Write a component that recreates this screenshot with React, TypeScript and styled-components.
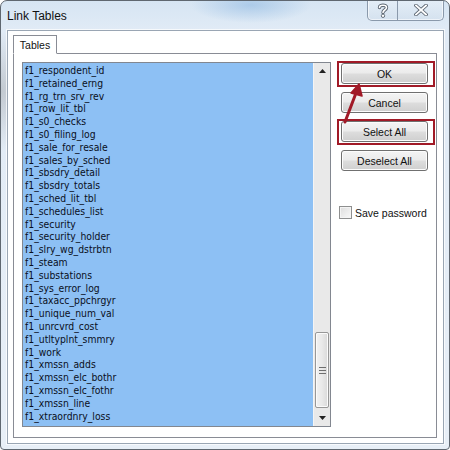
import React from "react";
import styled, { createGlobalStyle } from "styled-components";

const Global = createGlobalStyle`
  html, body { margin: 0; padding: 0; background: #ffffff; }
  body { font-family: "Liberation Sans", Arial, sans-serif; }
  * { box-sizing: border-box; }
`;

const tables = [
  "f1_respondent_id",
  "f1_retained_erng",
  "f1_rg_trn_srv_rev",
  "f1_row_lit_tbl",
  "f1_s0_checks",
  "f1_s0_filing_log",
  "f1_sale_for_resale",
  "f1_sales_by_sched",
  "f1_sbsdry_detail",
  "f1_sbsdry_totals",
  "f1_sched_lit_tbl",
  "f1_schedules_list",
  "f1_security",
  "f1_security_holder",
  "f1_slry_wg_dstrbtn",
  "f1_steam",
  "f1_substations",
  "f1_sys_error_log",
  "f1_taxacc_ppchrgyr",
  "f1_unique_num_val",
  "f1_unrcvrd_cost",
  "f1_utltyplnt_smmry",
  "f1_work",
  "f1_xmssn_adds",
  "f1_xmssn_elc_bothr",
  "f1_xmssn_elc_fothr",
  "f1_xmssn_line",
  "f1_xtraordnry_loss",
];

const Window = styled.div`
  position: relative;
  width: 450px;
  height: 450px;
  display: flex;
  flex-direction: column;
  border: 1px solid #5f6770;
  border-radius: 7px 7px 4px 4px;
  background:
    radial-gradient(ellipse 60px 18px at 250px 4px, rgba(120, 170, 220, 0.45), rgba(120, 170, 220, 0) 100%),
    radial-gradient(ellipse 40px 60px at 0px 90px, rgba(120, 120, 120, 0.3), rgba(120, 120, 120, 0) 100%),
    linear-gradient(180deg, #d6e5f3 0px, #e1ebf6 30px, #e8eff7 100%);
  overflow: hidden;
`;

const TitleBar = styled.div`
  height: 29px;
  display: flex;
  align-items: flex-start;
  justify-content: space-between;
  padding: 0 5px 0 6px;
`;

const Title = styled.div`
  font-family: "Liberation Sans", Arial, sans-serif;
  font-size: 12px;
  color: #111;
  margin-top: 8px;
`;

const CaptionGroup = styled.div`
  display: flex;
  margin-top: -1px;
  border: 1px solid #8a99ab;
  border-top: none;
  border-radius: 0 0 5px 5px;
  overflow: hidden;
  background: linear-gradient(180deg, rgba(255,255,255,0.35), rgba(200,215,230,0.4));
  box-shadow: inset 0 0 0 1px rgba(255, 255, 255, 0.6);
`;

const CaptionButton = styled.div<{ $w: number }>`
  width: ${(p) => p.$w}px;
  height: 20px;
  display: flex;
  align-items: center;
  justify-content: center;
  & + & { border-left: 1px solid #8a99ab; }
`;

const Client = styled.div`
  flex: 1;
  margin: 0 5px 5px 6px;
  border: 1px solid #9aa6b4;
  background: #ffffff;
  display: flex;
  flex-direction: column;
  padding: 4px 6px 5px 5px;
  box-shadow: 0 0 0 1px rgba(255, 255, 255, 0.7);
`;

const TabStrip = styled.div`
  display: flex;
  position: relative;
  z-index: 1;
  margin-bottom: -1px;
`;

const Tab = styled.div`
  width: 44px;
  height: 19px;
  border: 1px solid #898c95;
  border-bottom: 1px solid #ffffff;
  background: #ffffff;
  font-size: 10.5px;
  color: #111;
  display: flex;
  align-items: center;
  justify-content: center;
  padding-top: 1px;
`;

const Panel = styled.div`
  flex: 1;
  border: 1px solid #898c95;
  background: #ffffff;
  display: flex;
  padding: 8px 6px 10px 8px;
  gap: 10px;
`;

const ListBox = styled.div`
  width: 309px;
  border: 1px solid #828790;
  display: flex;
  background: #ffffff;
`;

const Rows = styled.div`
  flex: 1;
  background: #8dc0f4;
  padding: 1px 0 0 2px;
  overflow: hidden;
`;

const Row = styled.div`
  height: 12.8px;
  line-height: 12.8px;
  font-family: "DejaVu Sans Condensed", "Liberation Sans", sans-serif;
  font-size: 10.3px;
  color: #0a0f1c;
  white-space: nowrap;
`;

const ScrollBar = styled.div`
  width: 17px;
  background: #e9e9e9;
  border-left: 1px solid #f4f4f4;
  display: flex;
  flex-direction: column;
  padding: 0 1px;
`;

const Arrow = styled.div`
  height: 16px;
  display: flex;
  align-items: center;
  justify-content: center;
`;

const Track = styled.div`
  flex: 1;
  display: flex;
  flex-direction: column;
  justify-content: flex-end;
  padding-bottom: 2px;
`;

const Thumb = styled.div`
  height: 76px;
  border: 1px solid #979797;
  border-radius: 2px;
  background: linear-gradient(90deg, #f2f2f2 0%, #e9e9e9 50%, #d9d9d9 100%);
  box-shadow: inset 0 0 0 1px #fbfbfb;
  display: flex;
  align-items: center;
  justify-content: center;
`;

const Side = styled.div`
  width: 87px;
  display: flex;
  flex-direction: column;
  gap: 8px;
  padding-top: 1px;
`;

const Button = styled.div<{ $marked?: boolean }>`
  position: relative;
  height: 21px;
  border: 1px solid #707070;
  border-radius: 3px;
  background: linear-gradient(180deg, #f4f4f4 0%, #ebebeb 48%, #dddddd 52%, #cfcfcf 100%);
  box-shadow: inset 0 0 0 1px #fcfcfc;
  font-size: 10.5px;
  color: #111;
  display: flex;
  align-items: center;
  justify-content: center;
  &::before {
    content: "";
    display: ${(p) => (p.$marked ? "block" : "none")};
    position: absolute;
    left: -5px;
    right: -8px;
    top: -3px;
    bottom: -4px;
    border: 2px solid #a11a27;
  }
`;

const CheckRow = styled.label`
  margin-top: 27px;
  display: flex;
  align-items: center;
  gap: 3px;
  font-size: 10.5px;
  color: #111;
  margin-left: -2px;
`;

const CheckBox = styled.span`
  width: 13px;
  height: 13px;
  border: 1px solid #8e8f8f;
  background: linear-gradient(135deg, #dcdcdc 0%, #eeeeee 60%, #f8f8f8 100%);
  box-shadow: inset 0 0 0 1px #f4f4f4;
`;

const Annotation = styled.svg`
  position: absolute;
  left: 0;
  top: 0;
  pointer-events: none;
`;

export default function App() {
  return (
    <>
      <Global />
      <Window>
        <TitleBar>
          <Title>Link Tables</Title>
          <CaptionGroup>
            <CaptionButton $w={29}>
              <svg width="12" height="15" viewBox="0 0 12 15">
                <path d="M2.5 4.5 C2.5 1.5 9.5 1.5 9.5 4.5 C9.5 7 6 7 6 9.5" fill="none" stroke="#5a6470" strokeWidth="3.4" strokeLinecap="round" />
                <path d="M2.5 4.5 C2.5 1.5 9.5 1.5 9.5 4.5 C9.5 7 6 7 6 9.5" fill="none" stroke="#ffffff" strokeWidth="1.6" strokeLinecap="round" />
                <circle cx="6" cy="12.8" r="1.7" fill="#ffffff" stroke="#5a6470" strokeWidth="0.9" />
              </svg>
            </CaptionButton>
            <CaptionButton $w={46}>
              <svg width="14" height="12" viewBox="0 0 14 12">
                <path d="M2 1.5 L12 10.5 M12 1.5 L2 10.5" stroke="#5a6470" strokeWidth="3.6" strokeLinecap="square" />
                <path d="M2 1.5 L12 10.5 M12 1.5 L2 10.5" stroke="#ffffff" strokeWidth="1.8" strokeLinecap="square" />
              </svg>
            </CaptionButton>
          </CaptionGroup>
        </TitleBar>
        <Client>
          <TabStrip>
            <Tab>Tables</Tab>
          </TabStrip>
          <Panel>
            <ListBox>
              <Rows>
                {tables.map((t) => (
                  <Row key={t}>{t}</Row>
                ))}
              </Rows>
              <ScrollBar>
                <Arrow>
                  <svg width="7" height="4" viewBox="0 0 7 4">
                    <path d="M0 4 L3.5 0 L7 4 Z" fill="#222" />
                  </svg>
                </Arrow>
                <Track>
                  <Thumb>
                    <svg width="7" height="7" viewBox="0 0 7 7">
                      <path d="M0 0.5 H7 M0 3.5 H7 M0 6.5 H7" stroke="#6e6e6e" strokeWidth="1" />
                    </svg>
                  </Thumb>
                </Track>
                <Arrow>
                  <svg width="7" height="4" viewBox="0 0 7 4">
                    <path d="M0 0 L7 0 L3.5 4 Z" fill="#222" />
                  </svg>
                </Arrow>
              </ScrollBar>
            </ListBox>
            <Side>
              <Button $marked>OK</Button>
              <Button>Cancel</Button>
              <Button $marked>Select All</Button>
              <Button>Deselect All</Button>
              <CheckRow>
                <CheckBox />
                Save password
              </CheckRow>
            </Side>
          </Panel>
        </Client>
        <Annotation width="450" height="450" viewBox="0 0 450 450">
          <path d="M344 121 L355 92" stroke="#a11a27" strokeWidth="3" strokeLinecap="round" />
          <path d="M358 83 L350 92 L361 95 Z" fill="#a11a27" stroke="#a11a27" strokeWidth="1.5" strokeLinejoin="round" />
        </Annotation>
      </Window>
    </>
  );
}
